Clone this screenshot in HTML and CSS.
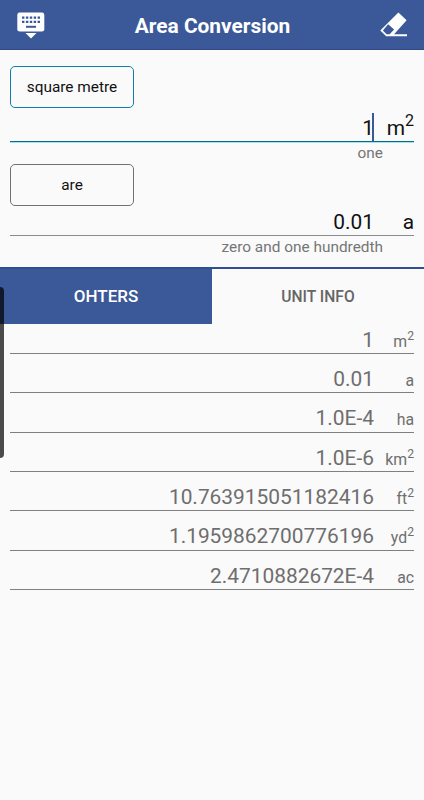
FILE: index.html
```html
<!DOCTYPE html>
<html lang="en">
<head>
<meta charset="utf-8">
<title>Area Conversion</title>
<link rel="stylesheet" href="styles.css">
</head>
<body>
<header class="bar">
  <svg class="icon-keyboard" width="28" height="28" viewBox="0 0 28 28">
    <rect x="0.3" y="0.6" width="27" height="19" rx="2.4" fill="#fff"/>
    <path d="M5 5.7H23M5 9.8H23" stroke="#3b5998" stroke-width="2.3" stroke-dasharray="2.4 1.5"/>
    <path d="M9 14.8H19" stroke="#3b5998" stroke-width="2"/>
    <path d="M8.5 21H19.5L14 26.6Z" fill="#fff"/>
  </svg>
  <h1 class="title">Area Conversion</h1>
  <svg class="icon-eraser" width="28" height="26" viewBox="0 0 28 26">
    <path d="M18.4 0.6L26.6 8.2L14.1 22.3H27V24.3H6.2L0.3 18.6Z" fill="#fff"/>
    <path d="M8.1 12.2L14.1 17.6L9.7 22.3H6.6L2.9 18.4Z" fill="#3b5998"/>
  </svg>
</header>
<main>
  <section class="converter">
    <button class="unit-button active">square metre</button>
    <div class="field focused"><span class="value">1<i class="caret"></i></span><span class="unit">m<sup>2</sup></span></div>
    <p class="words">one</p>
    <button class="unit-button">are</button>
    <div class="field result"><span class="value">0.01</span><span class="unit">a</span></div>
    <p class="words">zero and one hundredth</p>
  </section>
  <nav class="tabs">
    <span class="tab selected">OHTERS</span>
    <span class="tab">UNIT INFO</span>
  </nav>
  <section class="results">
    <div class="row"><span class="value">1</span><span class="unit">m<sup>2</sup></span></div>
    <div class="row"><span class="value">0.01</span><span class="unit">a</span></div>
    <div class="row"><span class="value">1.0E-4</span><span class="unit">ha</span></div>
    <div class="row"><span class="value">1.0E-6</span><span class="unit">km<sup>2</sup></span></div>
    <div class="row"><span class="value">10.763915051182416</span><span class="unit">ft<sup>2</sup></span></div>
    <div class="row"><span class="value">1.1959862700776196</span><span class="unit">yd<sup>2</sup></span></div>
    <div class="row"><span class="value">2.4710882672E-4</span><span class="unit">ac</span></div>
  </section>
</main>
<div class="edge-handle"></div>
</body>
</html>
```
FILE: styles.css
```css
* { box-sizing: border-box; }
body {
  margin: 0;
  min-height: 800px;
  background: #fafafa;
  color: #111;
  font-family: Roboto, sans-serif;
}
.bar {
  display: flex;
  align-items: center;
  justify-content: space-between;
  height: 50px;
  padding: 0 16px 0 17px;
  background: #3b5998;
  border-bottom: 1px solid #2f4a86;
}
.icon-keyboard { margin-top: 2px; }
.title {
  margin: 2px 0 0;
  color: #fff;
  font-size: 20.9px;
  font-weight: 700;
}
.converter { height: 217px; padding: 16px 10px 0; }
.unit-button {
  display: block;
  width: 124px;
  height: 42px;
  padding: 0;
  border: 1px solid #707070;
  border-radius: 5px;
  background: #fafafa;
  color: #111;
  font: 15.4px Roboto, sans-serif;
}
.unit-button.active { border-color: #0e7fa8; }
.field {
  display: flex;
  align-items: baseline;
  height: 34px;
  border-bottom: 1px solid #8c8c8c;
  font-size: 20.9px;
  line-height: 40px;
}
.field.focused {
  border-bottom-color: #00708c;
  box-shadow: 0 1px 0 #a9dfe9;
}
.field.result { margin-top: -4px; }
.value { flex: 1; text-align: right; }
.unit { width: 40px; text-align: right; }
sup {
  font-size: 0.77em;
  line-height: 0;
  vertical-align: 0.58em;
}
.caret {
  display: inline-block;
  width: 2px;
  height: 28px;
  margin-right: 0;
  margin-left: -2px;
  vertical-align: -6px;
  background: #3b5998;
}
.words {
  height: 22px;
  margin: 0 31px 0 0;
  color: #757575;
  font-size: 15.4px;
  line-height: 23px;
  text-align: right;
}
.tabs {
  display: flex;
  height: 57px;
  border-top: 2px solid #2f4f91;
}
.tab {
  flex: 1;
  color: #666;
  font-size: 15.6px;
  font-weight: 500;
  line-height: 56px;
  text-align: center;
}
.tab.selected {
  background: #3b5998;
  color: #fff;
  font-size: 17px;
  line-height: 54px;
}
.results { padding: 0 10px; margin-top: -9.4px; }
.row {
  display: flex;
  align-items: baseline;
  height: 39.33px;
  border-bottom: 1px solid #808080;
  color: #6e6e6e;
  font-size: 20.9px;
  line-height: 51px;
}
.row .unit { font-size: 15.8px; }
.edge-handle {
  position: absolute;
  top: 287px;
  left: 0;
  width: 4px;
  height: 171px;
  border-radius: 0 4px 4px 0;
  background: rgba(0, 0, 0, 0.7);
}
```
